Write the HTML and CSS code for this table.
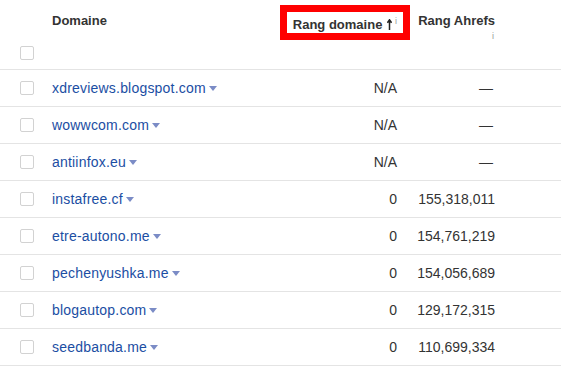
FILE: index.html
```html
<!DOCTYPE html>
<html lang="fr">
<head>
  <meta charset="UTF-8" />
  <meta name="viewport" content="width=device-width, initial-scale=1" />
  <title>Domaines référents</title>
  <link rel="stylesheet" href="styles.css">
</head>
<body>

  <div class="table">
    <div class="head">
      <div class="head-check"><span class="check"></span></div>
      <div class="th th-domain">Domaine</div>
      <div class="th th-dr">
        <span class="marked">Rang domaine
          <svg class="sort" width="5" height="11" viewBox="0 0 5 11"><path d="M2.5 11V1.5M0.4 3.8L2.5 0.8 4.6 3.8" fill="none" stroke="#222" stroke-width="1.5"/></svg><sup class="info">i</sup>
        </span>
      </div>
      <div class="th th-ar">Rang Ahrefs<span class="info info-below">i</span></div>
    </div>

    <div id="rows"></div>
  </div>

  <script>
    const domaines = [
      { nom: "xdreviews.blogspot.com", dr: "N/A", ar: "—" },
      { nom: "wowwcom.com", dr: "N/A", ar: "—" },
      { nom: "antiinfox.eu", dr: "N/A", ar: "—" },
      { nom: "instafree.cf", dr: "0", ar: "155,318,011" },
      { nom: "etre-autono.me", dr: "0", ar: "154,761,219" },
      { nom: "pechenyushka.me", dr: "0", ar: "154,056,689" },
      { nom: "blogautop.com", dr: "0", ar: "129,172,315" },
      { nom: "seedbanda.me", dr: "0", ar: "110,699,334" }
    ];

    const rows = document.getElementById("rows");
    domaines.forEach((d) => {
      const row = document.createElement("div");
      row.className = "row";
      row.innerHTML = `
        <div class="cell"><span class="check"></span></div>
        <div class="cell"><a class="domain" href="#">${d.nom}</a><span class="caret"></span></div>
        <div class="cell num">${d.dr}</div>
        <div class="cell num ${d.ar === "—" ? "dash" : ""}">${d.ar}</div>
        <div class="cell"></div>`;
      rows.appendChild(row);
    });
  </script>

</body>
</html>
```

FILE: styles.css
```css
* { box-sizing: border-box; margin: 0; padding: 0; }
body {
  background: #fff;
  font-family: "Liberation Sans", Arial, sans-serif;
  color: #333;
}

.table {
  width: 561px;
}

.head,
.row {
  display: grid;
  grid-template-columns: 52px 235px 110px 98px 66px;
  border-bottom: 1px solid #e4e4e4;
}

.head {
  height: 70px;
}

.row {
  height: 37px;
  align-items: center;
}

.head-check {
  grid-row: 1;
  grid-column: 1;
  align-self: end;
  padding: 0 0 9px 20px;
}

.th {
  font-size: 13px;
  font-weight: bold;
  color: #333;
  line-height: 16px;
  padding-top: 13px;
}

.th-dr,
.th-ar {
  text-align: right;
}

.marked {
  position: relative;
  display: inline-block;
  white-space: nowrap;
}

/* cadre rouge d'annotation */
.marked::after {
  content: "";
  position: absolute;
  left: -13px;
  right: -13px;
  top: -8px;
  bottom: -7px;
  border: 7px solid #f00;
}

.sort {
  vertical-align: -1px;
  margin-left: 1px;
}

.info {
  font-size: 9px;
  font-weight: normal;
  color: #999;
}

sup.info {
  vertical-align: 5px;
  margin-left: 3px;
}

.info-below {
  display: block;
  line-height: 10px;
  margin-top: 2px;
  padding-right: 1px;
}

.check {
  display: block;
  width: 14px;
  height: 14px;
  border: 1px solid #d2d2d2;
  border-radius: 2px;
  background: #fff;
}

.row .cell:first-child {
  padding-left: 20px;
}

.cell {
  font-size: 14px;
  white-space: nowrap;
}

.domain {
  color: #1b4ea3;
  text-decoration: none;
  letter-spacing: 0.2px;
}

.caret {
  display: inline-block;
  margin-left: 3px;
  border-left: 4px solid transparent;
  border-right: 4px solid transparent;
  border-top: 5px solid #7b8cc6;
  vertical-align: 2px;
}

.num {
  text-align: right;
  color: #333;
}

.dash {
  padding-right: 2px;
}
```
